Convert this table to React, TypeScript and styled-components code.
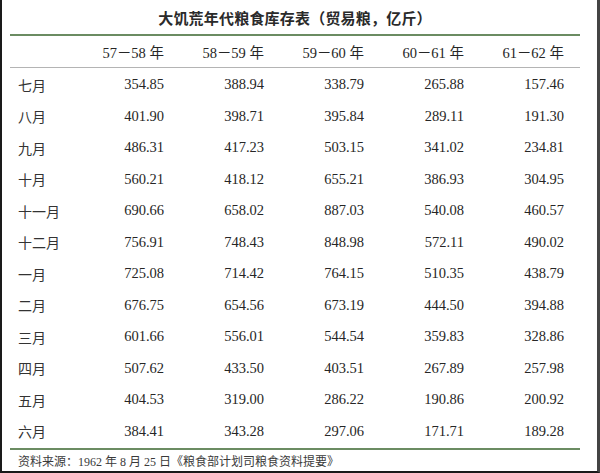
import styled, { createGlobalStyle } from 'styled-components';

const GlobalStyle = createGlobalStyle`
  html, body {
    margin: 0;
    padding: 0;
    background: #ffffff;
  }
`

const Frame = styled.div`
  box-sizing: border-box;
  width: 600px;
  height: 473px;
  background: #ffffff;
  border-left: 2px solid #1a1a1a;
  border-bottom: 2px solid #1a1a1a;
  border-right: 3px solid #444;
  padding: 0 17px 0 8px;
  display: flex;
  flex-direction: column;
  color: #262626;
  font-family: "Liberation Serif", "Noto Sans CJK SC", serif;
`

const Title = styled.div`
  height: 34px;
  display: flex;
  align-items: center;
  justify-content: center;
  font-size: 15px;
  font-weight: 700;
  color: #2a2a2a;
  letter-spacing: 0.2px;
`

const Rule = styled.div<{ $color: string; $size: number }>`
  height: ${p => p.$size}px;
  background: ${p => p.$color};
`

const Grid = styled.div`
  display: grid;
  grid-template-columns: 62px repeat(5, 100px);
`

const HeaderRow = styled(Grid)`
  height: 31px;
  align-items: center;
`

const Body = styled.div`
  padding: 1px 0;
  display: flex;
  flex-direction: column;
`

const Row = styled(Grid)`
  height: 31.5px;
  align-items: center;
`

const Label = styled.div`
  padding-left: 8px;
  font-size: 14px;
  color: #333;
`

const Cell = styled.div`
  text-align: right;
  padding-right: 8px;
  font-size: 14.5px;
  white-space: pre;
`

const Footer = styled.div`
  flex: 1;
  display: flex;
  align-items: center;
  padding-left: 8px;
  font-size: 12px;
  color: #3a3a3a;
  white-space: pre;
`

const years = ['57－58 年', '58－59 年', '59－60 年', '60－61 年', '61－62 年'];

const rows: [string, string[]][] = [
  ['七月', ['354.85', '388.94', '338.79', '265.88', '157.46']],
  ['八月', ['401.90', '398.71', '395.84', '289.11', '191.30']],
  ['九月', ['486.31', '417.23', '503.15', '341.02', '234.81']],
  ['十月', ['560.21', '418.12', '655.21', '386.93', '304.95']],
  ['十一月', ['690.66', '658.02', '887.03', '540.08', '460.57']],
  ['十二月', ['756.91', '748.43', '848.98', '572.11', '490.02']],
  ['一月', ['725.08', '714.42', '764.15', '510.35', '438.79']],
  ['二月', ['676.75', '654.56', '673.19', '444.50', '394.88']],
  ['三月', ['601.66', '556.01', '544.54', '359.83', '328.86']],
  ['四月', ['507.62', '433.50', '403.51', '267.89', '257.98']],
  ['五月', ['404.53', '319.00', '286.22', '190.86', '200.92']],
  ['六月', ['384.41', '343.28', '297.06', '171.71', '189.28']],
];

const App: React.FC = () => {
  return (
    <>
      <GlobalStyle />
      <Frame>
        <Title>大饥荒年代粮食库存表（贸易粮，亿斤）</Title>
        <Rule $color="#6b8c62" $size={2} />
        <HeaderRow>
          <div />
          {years.map(y => (
            <Cell key={y}>{y}</Cell>
          ))}
        </HeaderRow>
        <Rule $color="#b4b4b4" $size={1} />
        <Body>
          {rows.map(([label, values]) => (
            <Row key={label}>
              <Label>{label}</Label>
              {values.map((v, i) => (
                <Cell key={i}>{v}</Cell>
              ))}
            </Row>
          ))}
        </Body>
        <Rule $color="#6b8c62" $size={2} />
        <Footer>{'资料来源：1962 年 8 月 25 日《粮食部计划司粮食资料提要》'}</Footer>
      </Frame>
    </>
  );
};

export default App;
